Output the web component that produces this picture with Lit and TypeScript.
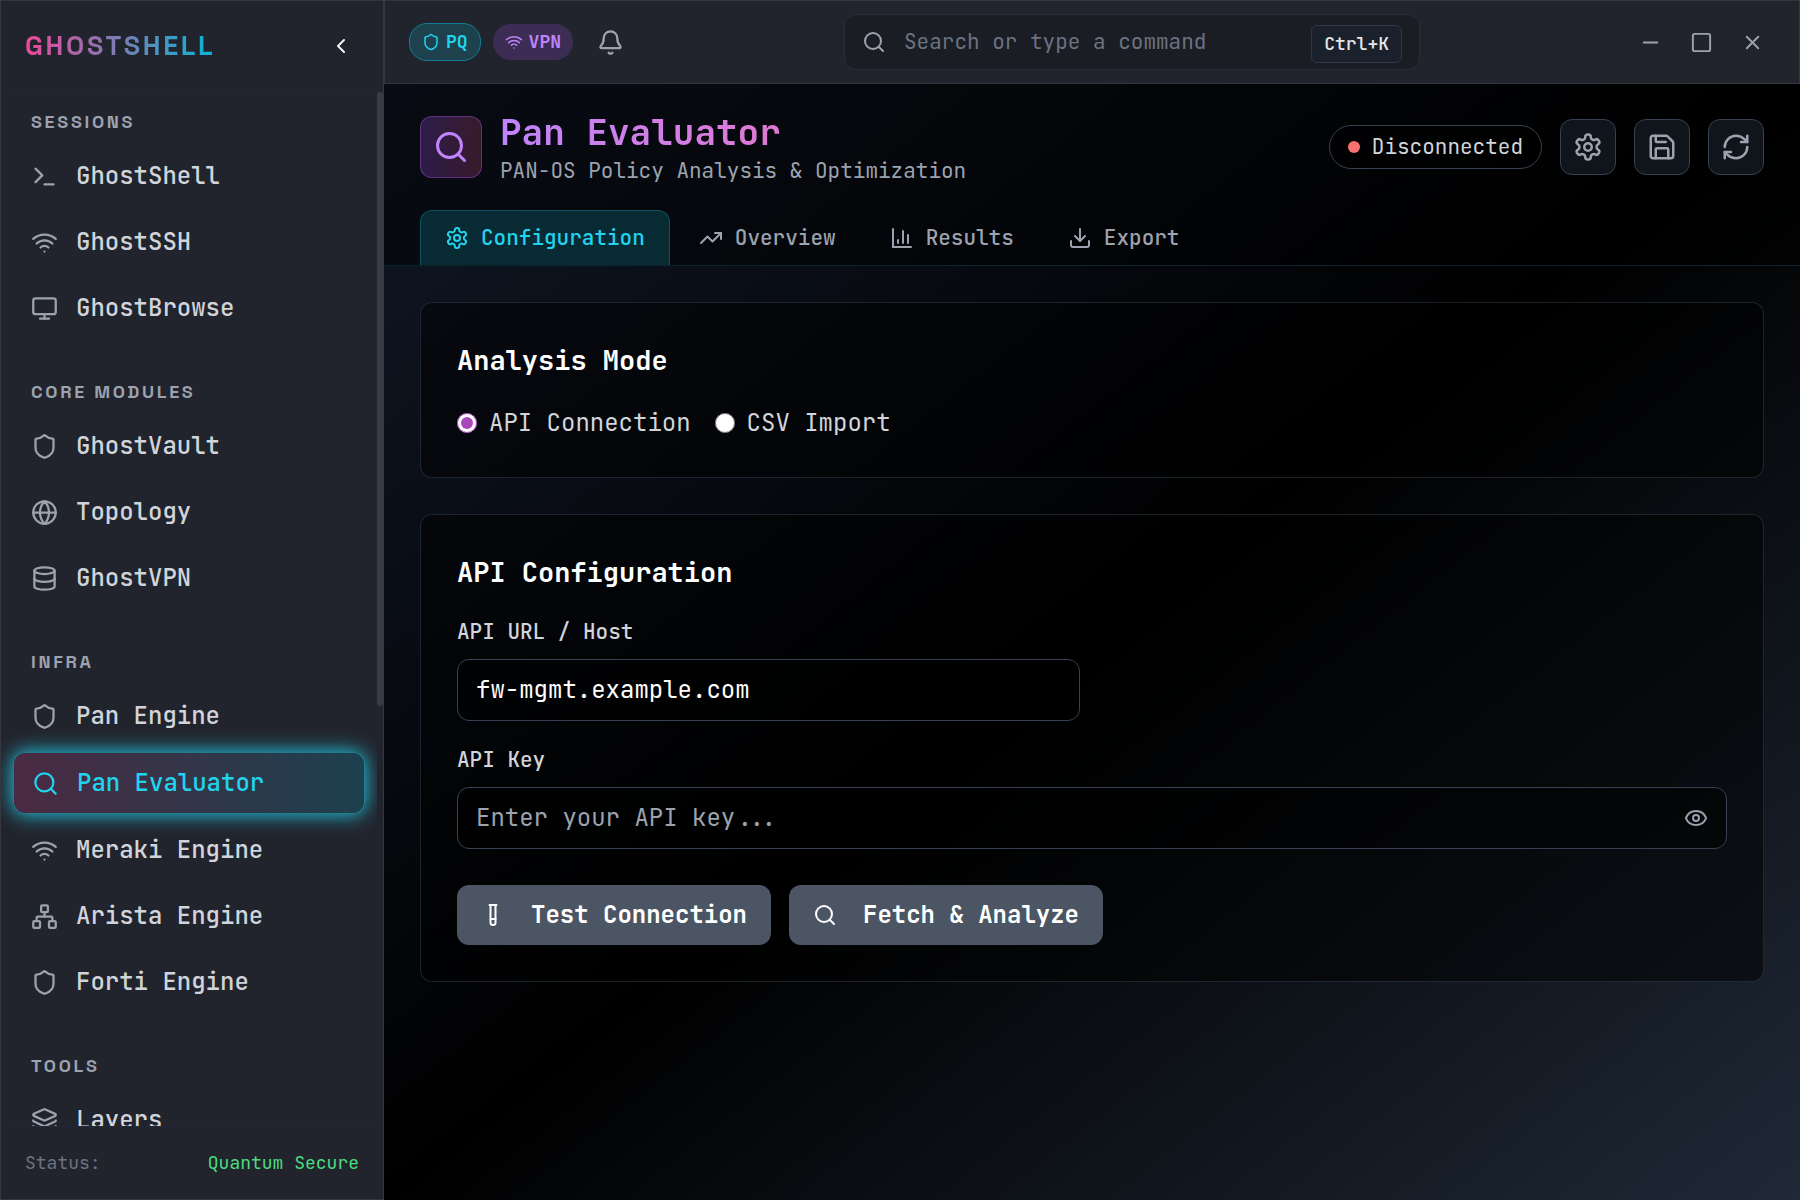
import { LitElement, html, css, svg, nothing } from "lit";
import { customElement, property, state } from "lit/decorators.js";
import { classMap } from "lit/directives/class-map.js";

const ICONS = {
  terminal: svg`<path d="m4 17 6-6-6-6"/><path d="M12 19h8"/>`,
  wifi: svg`<path d="M12 20h.01"/><path d="M2 8.82a15 15 0 0 1 20 0"/><path d="M5 12.859a10 10 0 0 1 14 0"/><path d="M8.5 16.429a5 5 0 0 1 7 0"/>`,
  monitor: svg`<rect width="20" height="14" x="2" y="3" rx="2"/><path d="M8 21h8"/><path d="M12 17v4"/>`,
  shield: svg`<path d="M20 13c0 5-3.5 7.5-7.66 8.95a1 1 0 0 1-.67-.01C7.5 20.5 4 18 4 13V6a1 1 0 0 1 1-1c2 0 4.5-1.2 6.24-2.72a1.17 1.17 0 0 1 1.52 0C14.51 3.81 17 5 19 5a1 1 0 0 1 1 1z"/>`,
  globe: svg`<circle cx="12" cy="12" r="10"/><path d="M12 2a14.5 14.5 0 0 0 0 20 14.5 14.5 0 0 0 0-20"/><path d="M2 12h20"/>`,
  database: svg`<ellipse cx="12" cy="5" rx="9" ry="3"/><path d="M3 5v14a9 3 0 0 0 18 0V5"/><path d="M3 12a9 3 0 0 0 18 0"/>`,
  search: svg`<circle cx="11" cy="11" r="8"/><path d="m21 21-4.3-4.3"/>`,
  network: svg`<rect x="16" y="16" width="6" height="6" rx="1"/><rect x="2" y="16" width="6" height="6" rx="1"/><rect x="9" y="2" width="6" height="6" rx="1"/><path d="M5 16v-3a1 1 0 0 1 1-1h12a1 1 0 0 1 1 1v3"/><path d="M12 12V8"/>`,
  layers: svg`<path d="M12.83 2.18a2 2 0 0 0-1.66 0L2.6 6.08a1 1 0 0 0 0 1.83l8.58 3.91a2 2 0 0 0 1.66 0l8.58-3.9a1 1 0 0 0 0-1.83z"/><path d="M2 12a1 1 0 0 0 .58.91l8.6 3.91a2 2 0 0 0 1.65 0l8.58-3.9A1 1 0 0 0 22 12"/><path d="M2 17a1 1 0 0 0 .58.91l8.6 3.91a2 2 0 0 0 1.65 0l8.58-3.9A1 1 0 0 0 22 17"/>`,
  chevronLeft: svg`<path d="m15 18-6-6 6-6"/>`,
  bell: svg`<path d="M10.268 21a2 2 0 0 0 3.464 0"/><path d="M3.262 15.326A1 1 0 0 0 4 17h16a1 1 0 0 0 .74-1.673C19.41 13.956 18 12.499 18 8A6 6 0 0 0 6 8c0 4.499-1.411 5.956-2.738 7.326"/>`,
  minus: svg`<path d="M5 12h14"/>`,
  square: svg`<rect width="18" height="18" x="3" y="3" rx="2"/>`,
  close: svg`<path d="M18 6 6 18"/><path d="m6 6 12 12"/>`,
  settings: svg`<path d="M12.22 2h-.44a2 2 0 0 0-2 2v.18a2 2 0 0 1-1 1.73l-.43.25a2 2 0 0 1-2 0l-.15-.08a2 2 0 0 0-2.73.73l-.22.38a2 2 0 0 0 .73 2.73l.15.1a2 2 0 0 1 1 1.72v.51a2 2 0 0 1-1 1.74l-.15.09a2 2 0 0 0-.73 2.73l.22.38a2 2 0 0 0 2.73.73l.15-.08a2 2 0 0 1 2 0l.43.25a2 2 0 0 1 1 1.73V20a2 2 0 0 0 2 2h.44a2 2 0 0 0 2-2v-.18a2 2 0 0 1 1-1.73l.43-.25a2 2 0 0 1 2 0l.15.08a2 2 0 0 0 2.73-.73l.22-.39a2 2 0 0 0-.73-2.73l-.15-.08a2 2 0 0 1-1-1.74v-.5a2 2 0 0 1 1-1.74l.15-.09a2 2 0 0 0 .73-2.73l-.22-.38a2 2 0 0 0-2.73-.73l-.15.08a2 2 0 0 1-2 0l-.43-.25a2 2 0 0 1-1-1.73V4a2 2 0 0 0-2-2z"/><circle cx="12" cy="12" r="3"/>`,
  save: svg`<path d="M15.2 3a2 2 0 0 1 1.4.6l3.8 3.8a2 2 0 0 1 .6 1.4V19a2 2 0 0 1-2 2H5a2 2 0 0 1-2-2V5a2 2 0 0 1 2-2z"/><path d="M17 21v-7a1 1 0 0 0-1-1H8a1 1 0 0 0-1 1v7"/><path d="M7 3v4a1 1 0 0 0 1 1h7"/>`,
  refresh: svg`<path d="M3 12a9 9 0 0 1 9-9 9.75 9.75 0 0 1 6.74 2.74L21 8"/><path d="M21 3v5h-5"/><path d="M21 12a9 9 0 0 1-9 9 9.75 9.75 0 0 1-6.74-2.74L3 16"/><path d="M8 16H3v5"/>`,
  trending: svg`<path d="M16 7h6v6"/><path d="m22 7-8.5 8.5-5-5L2 17"/>`,
  chart: svg`<path d="M3 3v18h18" stroke-linejoin="miter"/><path d="M13 17V5"/><path d="M18 17V9"/><path d="M8 17v-3"/>`,
  download: svg`<path d="M12 15V3"/><path d="M21 15v4a2 2 0 0 1-2 2H5a2 2 0 0 1-2-2v-4"/><path d="m7 10 5 5 5-5"/>`,
  eye: svg`<path d="M2.062 12.348a1 1 0 0 1 0-.696 10.75 10.75 0 0 1 19.876 0 1 1 0 0 1 0 .696 10.75 10.75 0 0 1-19.876 0"/><circle cx="12" cy="12" r="3"/>`,
  tube: svg`<path d="M14.5 2v17.5c0 1.4-1.1 2.5-2.5 2.5c-1.4 0-2.5-1.1-2.5-2.5V2"/><path d="M8.5 2h7"/><path d="M14.5 16h-5"/>`,
};

type IconName = keyof typeof ICONS;

const icon = (name: IconName, size: number, weight = 2) => html`<svg
  width=${size} height=${size} viewBox="0 0 24 24" fill="none" stroke="currentColor"
  stroke-width=${weight} stroke-linecap="round" stroke-linejoin="round" aria-hidden="true"
>${ICONS[name]}</svg>`;

const base = css`
  *, *::before, *::after { box-sizing: border-box; }
  svg { display: block; flex: none; }
  h1, h2, p, ul { margin: 0; padding: 0; }
  ul { list-style: none; }
  a { color: inherit; text-decoration: none; }
  button, input, kbd { font: inherit; color: inherit; }
  button { margin: 0; padding: 0; border: 0; background: none; cursor: pointer; }
`;

interface NavSection { title: string; items: [string, IconName][]; }

const NAV: NavSection[] = [
  { title: "Sessions", items: [["GhostShell", "terminal"], ["GhostSSH", "wifi"], ["GhostBrowse", "monitor"]] },
  { title: "Core Modules", items: [["GhostVault", "shield"], ["Topology", "globe"], ["GhostVPN", "database"]] },
  { title: "Infra", items: [["Pan Engine", "shield"], ["Pan Evaluator", "search"], ["Meraki Engine", "wifi"], ["Arista Engine", "network"], ["Forti Engine", "shield"]] },
  { title: "Tools", items: [["Layers", "layers"]] },
];

@customElement("ghost-sidebar")
class GhostSidebar extends LitElement {
  @property() active = "";

  static styles = [base, css`
    :host {
      display: flex; flex-direction: column; min-height: 0;
      background: #22242d; border: 1px solid #363840; color: #d1d5db;
    }
    .head {
      display: flex; align-items: center; justify-content: space-between;
      height: 91px; flex: none; padding: 0 24px;
      border-bottom: 1px solid #24263a;
    }
    .logo {
      font: 700 27px/36px "Space Grotesk", Inter, "Liberation Sans", sans-serif;
      letter-spacing: 0.1em; color: transparent;
      background: linear-gradient(90deg, #ec4899, #06b6d4); background-clip: text;
    }
    .collapse { display: grid; place-items: center; width: 36px; height: 36px; color: #f3f4f6; }
    .scroll { flex: 1; min-height: 0; display: flex; }
    .list {
      flex: 1; min-width: 0; overflow: hidden; padding: 18px 12px;
      display: flex; flex-direction: column; gap: 42px;
    }
    .title {
      font: 700 18px/24px "Space Grotesk", Inter, "Liberation Sans", sans-serif;
      letter-spacing: 0.15em; text-transform: uppercase; color: #9ca3af;
      padding-left: 18px; margin-bottom: 12px;
    }
    .items { display: flex; flex-direction: column; gap: 6px; }
    .item {
      display: flex; align-items: center; gap: 18px; padding: 12px 18px;
      border-radius: 12px; line-height: 36px; font-weight: 500;
    }
    .item svg { color: #9ca3af; }
    .active {
      color: #22d3ee; border: 1px solid rgba(34, 211, 238, 0.5);
      background: linear-gradient(90deg, rgba(236, 72, 153, 0.2), rgba(6, 182, 212, 0.2)) padding-box;
      box-shadow: 0 0 20px #22d3ee;
    }
    .active svg { color: inherit; }
    .track { width: 6px; flex: none; }
    .thumb { height: 59.4%; border-radius: 6px; background: #393b44; }
    .foot {
      flex: none; display: flex; justify-content: space-between; padding: 24px;
      border-top: 1px solid #24263a; font-size: 18px; line-height: 24px; color: #6b7280;
    }
    .secure { color: #4ade80; }
  `];

  render() {
    return html`
      <div class="head">
        <span class="logo">GHOSTSHELL</span>
        <button class="collapse" aria-label="Collapse sidebar">${icon("chevronLeft", 24)}</button>
      </div>
      <div class="scroll">
        <nav class="list">
          ${NAV.map((s) => html`<section>
            <h2 class="title">${s.title}</h2>
            <ul class="items">
              ${s.items.map(([name, glyph]) => html`<li>
                <a href="#" class=${classMap({ item: true, active: name === this.active })}
                  aria-current=${name === this.active ? "page" : nothing}>${icon(glyph, 27)}<span>${name}</span></a>
              </li>`)}
            </ul>
          </section>`)}
        </nav>
        <div class="track"><div class="thumb"></div></div>
      </div>
      <div class="foot"><span>Status:</span><span class="secure">Quantum Secure</span></div>
    `;
  }
}

@customElement("ghost-topbar")
class GhostTopbar extends LitElement {
  static styles = [base, css`
    :host {
      display: flex; align-items: center; justify-content: space-between;
      height: 84px; flex: none; padding: 0 24px; background: #22242d;
      border: 1px solid #363840; color: #9ca3af;
    }
    .group { display: flex; align-items: center; gap: 12px; }
    .badge {
      display: flex; align-items: center; gap: 6px; padding: 6px 12px; border-radius: 18px;
      font-size: 18px; line-height: 24px; font-weight: 600;
    }
    .pq { color: #22d3ee; background: #1d424e; border: 1px solid #147d91; }
    .vpn { color: #c084fc; background: #3d2d54; }
    .bell { display: grid; place-items: center; width: 51px; height: 51px; }
    .search {
      display: flex; align-items: center; gap: 18px; flex: 0 1 576px; height: 56px;
      padding: 0 17px; border: 1px solid #2a2c38; border-radius: 12px; background: #1b1d25;
    }
    .search input {
      flex: 1; min-width: 0; padding: 0; border: 0; outline: 0; background: none;
      font-size: 21px; line-height: 30px;
    }
    .search input::placeholder { color: #6b7280; opacity: 1; }
    kbd {
      padding: 6px 12px; margin-top: 3px; border: 1px solid #303947; border-radius: 6px;
      background: #1a212c; font-size: 18px; line-height: 24px; color: #e5e7eb; font-weight: 500;
    }
    .windows { display: flex; gap: 6px; }
    .windows button { display: grid; place-items: center; width: 45px; height: 45px; }
  `];

  render() {
    return html`
      <div class="group">
        <span class="badge pq">${icon("shield", 18)}PQ</span>
        <span class="badge vpn">${icon("wifi", 18)}VPN</span>
        <button class="bell" aria-label="Notifications">${icon("bell", 27)}</button>
      </div>
      <label class="search">
        ${icon("search", 24)}
        <input type="text" aria-label="Search or type a command" placeholder="Search or type a command" />
        <kbd>Ctrl+K</kbd>
      </label>
      <div class="windows">
        <button aria-label="Minimize">${icon("minus", 23)}</button>
        <button aria-label="Maximize">${icon("square", 23)}</button>
        <button aria-label="Close">${icon("close", 23)}</button>
      </div>
    `;
  }
}

const TABS: [string, IconName][] = [
  ["Configuration", "settings"], ["Overview", "trending"], ["Results", "chart"], ["Export", "download"],
];

@customElement("pan-evaluator")
class PanEvaluator extends LitElement {
  @state() private tab = "Configuration";
  @state() private mode = "API Connection";

  static styles = [base, css`
    :host {
      display: flex; flex-direction: column; flex: 1; min-height: 0;
      background: linear-gradient(to bottom right, #111827, #000 50%, #1f2937);
      color: #d1d5db;
    }
    .header { padding: 24px 36px 0; background: rgba(0, 0, 0, 0.5); border-bottom: 1px solid #0b232c; }
    .top { display: flex; align-items: center; justify-content: space-between; margin-bottom: 24px; }
    .brand, .tools { display: flex; align-items: center; gap: 18px; }
    .mark {
      display: grid; place-items: center; padding: 12px; border-radius: 12px; color: #c084fc;
      border: 1px solid rgba(168, 85, 247, 0.4);
      background: linear-gradient(to right, rgba(147, 80, 234, 0.26), rgba(219, 80, 130, 0.24));
    }
    h1 {
      font-size: 36px; line-height: 48px; font-weight: 600; color: transparent;
      background: linear-gradient(90deg, #c084fc, #f472b6) 0 0 / 466px 100%; background-clip: text;
    }
    .sub { font-size: 21px; line-height: 30px; color: #9ca3af; }
    .status {
      display: flex; align-items: center; gap: 12px; padding: 6px 18px; border: 1px solid #374151;
      border-radius: 22px; font-size: 21px; line-height: 30px; background: rgba(0, 0, 0, 0.4);
    }
    .dot { width: 12px; height: 12px; border-radius: 50%; background: #f87171; }
    .tool {
      padding: 12px; border: 1px solid #374151; border-radius: 12px; color: #9ca3af;
      background: rgba(31, 41, 55, 0.5);
    }
    .tabs { display: flex; gap: 4px; }
    .tab {
      display: flex; align-items: center; gap: 12px; height: 55px; padding: 0 24px;
      border: 1px solid transparent; border-bottom: 0; border-radius: 12px 12px 0 0;
      font-size: 21px; font-weight: 500; color: #9ca3af;
    }
    .selected { color: #22d3ee; border-color: #0b5362; background: #082a33; }
    .body { flex: 1; padding: 36px; display: flex; flex-direction: column; gap: 36px; }
    .card {
      padding: 36px; border: 1px solid rgba(55, 65, 81, 0.5); border-radius: 12px;
      background: rgba(0, 0, 0, 0.5);
    }
    h2 { font-size: 27px; line-height: 42px; font-weight: 600; color: #fff; margin-bottom: 24px; }
    .modes { display: flex; gap: 24px; }
    .modes label { display: flex; align-items: center; gap: 12px; font-size: 24px; line-height: 36px; }
    .modes input { width: 20px; height: 20px; margin: 0; accent-color: #ab47bc; }
    .fields { display: grid; grid-template-columns: 1fr 1fr; gap: 24px; }
    .field { display: flex; flex-direction: column; gap: 12px; }
    .wide { grid-column: 1 / -1; }
    .field label { font-size: 21px; line-height: 30px; font-weight: 500; }
    .box {
      display: flex; align-items: center; gap: 18px; height: 62px; padding: 0 18px;
      border: 1px solid #374151; border-radius: 12px; background: rgba(0, 0, 0, 0.5);
    }
    .box input {
      flex: 1; min-width: 0; padding: 0; border: 0; outline: 0; background: none;
      font-size: 24px; line-height: 36px; color: #fff;
    }
    .box input::placeholder { color: #9ca3af; opacity: 1; }
    .box button { color: #9ca3af; }
    .actions { display: flex; gap: 18px; margin-top: 36px; }
    .action {
      display: flex; align-items: center; gap: 26px; height: 60px; padding: 0 24px;
      border-radius: 12px; background: #4b5563; color: #fff; font-size: 24px; font-weight: 600;
    }
  `];

  render() {
    return html`
      <header class="header">
        <div class="top">
          <div class="brand">
            <div class="mark">${icon("search", 36)}</div>
            <div>
              <h1>Pan Evaluator</h1>
              <p class="sub">PAN-OS Policy Analysis &amp; Optimization</p>
            </div>
          </div>
          <div class="tools">
            <span class="status"><span class="dot"></span>Disconnected</span>
            <button class="tool" aria-label="Settings">${icon("settings", 30)}</button>
            <button class="tool" aria-label="Save">${icon("save", 30)}</button>
            <button class="tool" aria-label="Refresh">${icon("refresh", 30)}</button>
          </div>
        </div>
        <div class="tabs" role="tablist">
          ${TABS.map(([name, glyph]) => html`<button role="tab"
            class=${classMap({ tab: true, selected: name === this.tab })}
            aria-selected=${name === this.tab ? "true" : "false"}
            @click=${() => (this.tab = name)}>${icon(glyph, 24)}${name}</button>`)}
        </div>
      </header>
      <div class="body">
        <section class="card">
          <h2>Analysis Mode</h2>
          <div class="modes">
            ${["API Connection", "CSV Import"].map((m) => html`<label>
              <input type="radio" name="mode" .checked=${m === this.mode} @change=${() => (this.mode = m)} />${m}
            </label>`)}
          </div>
        </section>
        <section class="card">
          <h2>API Configuration</h2>
          <div class="fields">
            <div class="field">
              <label for="host">API URL / Host</label>
              <div class="box"><input id="host" type="text" value="fw-mgmt.example.com" /></div>
            </div>
            <div class="field wide">
              <label for="key">API Key</label>
              <div class="box">
                <input id="key" type="password" placeholder="Enter your API key..." />
                <button aria-label="Show key">${icon("eye", 24)}</button>
              </div>
            </div>
          </div>
          <div class="actions">
            <button class="action">${icon("tube", 24)}Test Connection</button>
            <button class="action">${icon("search", 24)}Fetch &amp; Analyze</button>
          </div>
        </section>
      </div>
    `;
  }
}

@customElement("app-root")
class AppRoot extends LitElement {
  static styles = [base, css`
    :host {
      display: grid; grid-template-columns: 384px minmax(0, 1fr); height: 100vh;
      overflow: hidden; background: #000;
      font: 400 24px/36px "JetBrains Mono", "DejaVu Sans Mono", "Liberation Mono", monospace;
    }
    .main { display: flex; flex-direction: column; min-width: 0; min-height: 0; }
  `];

  render() {
    return html`
      <ghost-sidebar active="Pan Evaluator"></ghost-sidebar>
      <main class="main">
        <ghost-topbar></ghost-topbar>
        <pan-evaluator></pan-evaluator>
      </main>
    `;
  }
}
